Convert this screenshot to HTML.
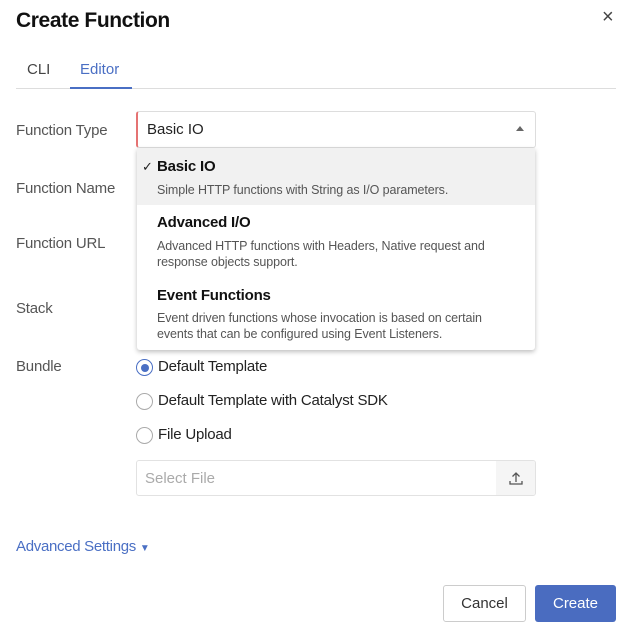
<!DOCTYPE html>
<html><head><style>
*{margin:0;padding:0;box-sizing:border-box}
body{width:633px;height:636px;background:#fff;font-family:"Liberation Sans",sans-serif;position:relative;overflow:hidden;color:#222}
.a{position:absolute;white-space:nowrap}
.lbl{font-size:15px;color:#555;left:16px;letter-spacing:-0.2px}
.r{position:absolute;left:136px;width:17px;height:17px;border:1px solid #aaa;border-radius:50%;background:#fff}
.rt{left:158px;font-size:15px;color:#222;letter-spacing:-0.2px}
.t{font-size:15px;font-weight:bold;color:#111;left:157px;letter-spacing:-0.2px}
.d{font-size:12.5px;color:#555;left:157px;line-height:16px;letter-spacing:-0.1px}
</style></head><body>
<div class="a" style="left:16px;top:9px;font-size:21px;font-weight:bold;color:#111;letter-spacing:-0.4px">Create Function</div>
<div class="a" style="left:602px;top:6px;font-size:20px;color:#444">×</div>
<div class="a" style="left:27px;top:61px;font-size:15px;color:#444">CLI</div>
<div class="a" style="left:80px;top:61px;font-size:15px;color:#4a6fc4">Editor</div>
<div class="a" style="left:16px;top:88px;width:600px;height:1px;background:#ddd"></div>
<div class="a" style="left:70px;top:87px;width:62px;height:2px;background:#4a6fc4"></div>
<div class="a lbl" style="top:122px">Function Type</div>
<div class="a lbl" style="top:180px">Function Name</div>
<div class="a lbl" style="top:235px">Function URL</div>
<div class="a lbl" style="top:300px">Stack</div>
<div class="a lbl" style="top:358px">Bundle</div>
<div class="a" style="left:136px;top:111px;width:400px;height:37px;border:1px solid #ddd;border-left:2px solid #e57373;border-radius:3px"></div>
<div class="a" style="left:147px;top:121px;font-size:15px;color:#222">Basic IO</div>
<div class="a" style="left:516px;top:126px;width:0;height:0;border-left:4px solid transparent;border-right:4px solid transparent;border-bottom:5px solid #666"></div>
<div class="a" style="left:137px;top:148px;width:398px;height:202px;background:#fff;box-shadow:0 2px 5px rgba(0,0,0,.25);border-radius:0 0 3px 3px"></div>
<div class="a" style="left:137px;top:148px;width:398px;height:57px;background:#f1f1f1"></div>
<div class="a" style="left:142px;top:159px;font-size:13px;color:#222">✓</div>
<div class="a t" style="top:158px">Basic IO</div>
<div class="a d" style="top:182px">Simple HTTP functions with String as I/O parameters.</div>
<div class="a t" style="top:214px">Advanced I/O</div>
<div class="a d" style="top:238px">Advanced HTTP functions with Headers, Native request and<br>response objects support.</div>
<div class="a t" style="top:287px">Event Functions</div>
<div class="a d" style="top:310px">Event driven functions whose invocation is based on certain<br>events that can be configured using Event Listeners.</div>
<div class="r" style="top:359px;border-color:#4a6fc4"><div style="position:absolute;left:3.5px;top:3.5px;width:8px;height:8px;border-radius:50%;background:#4a6fc4"></div></div>
<div class="a rt" style="top:358px">Default Template</div>
<div class="r" style="top:393px"></div>
<div class="a rt" style="top:392px">Default Template with Catalyst SDK</div>
<div class="r" style="top:427px"></div>
<div class="a rt" style="top:426px">File Upload</div>
<div class="a" style="left:136px;top:460px;width:400px;height:36px;border:1px solid #e2e2e2;border-radius:3px;overflow:hidden">
<div style="position:absolute;right:0;top:0;width:39px;height:36px;background:#f5f5f5"></div>
<svg style="position:absolute;right:11px;top:9px" width="16" height="16" viewBox="0 0 16 16"><path d="M8 12V3M4.5 6.5L8 3l3.5 3.5M2 11v3h12v-3" fill="none" stroke="#555" stroke-width="1.3"/></svg>
</div>
<div class="a" style="left:145px;top:470px;font-size:15px;color:#aaa">Select File</div>
<div class="a" style="left:16px;top:538px;font-size:15px;color:#4a6fc4;letter-spacing:-0.3px">Advanced Settings <span style="font-size:10px">▼</span></div>
<div class="a" style="left:443px;top:585px;width:83px;height:37px;border:1px solid #ccc;border-radius:3px;font-size:15px;color:#333;text-align:center;line-height:35px">Cancel</div>
<div class="a" style="left:535px;top:585px;width:81px;height:37px;background:#4a6cc0;border-radius:3px;font-size:15px;color:#fff;text-align:center;line-height:37px">Create</div>
</body></html>
